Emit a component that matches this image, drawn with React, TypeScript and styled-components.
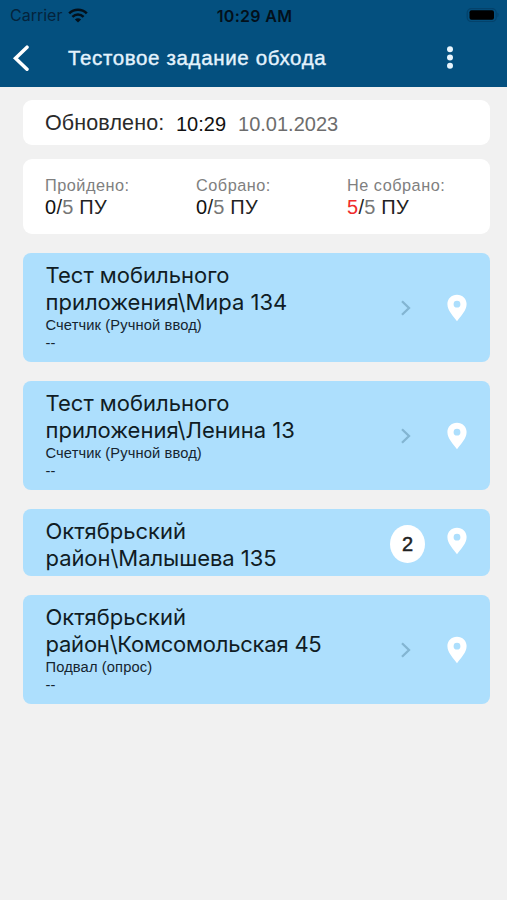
import React from "react";
import styled, { createGlobalStyle } from "styled-components";

const GlobalStyle = createGlobalStyle`
  * { box-sizing: border-box; }
  body { margin: 0; background: #f1f1f1; }
`;

const helvetica = `"Liberation Sans", Arial, sans-serif`;
const system = `Inter, "Liberation Sans", sans-serif`;

const Screen = styled.div`
  width: 507px;
  min-height: 900px;
  background: #f1f1f1;
  color: #111;
  font-family: ${helvetica};
`;

const Header = styled.header`
  height: 87px;
  background: #04507f;
`;

const StatusBar = styled.div`
  display: grid;
  grid-template-columns: 1fr auto 1fr;
  align-items: center;
  height: 30px;
  padding: 0 8px 0 10px;
  color: #03101b;
  font-family: ${system};
  font-size: 16px;
  line-height: 28px;
`;

const Carrier = styled.div`
  display: flex;
  align-items: center;
  gap: 6px;
  color: #04243c;
`;

const Clock = styled.div`
  padding-top: 1px;
  font-weight: 600;
  font-size: 16px;
  letter-spacing: 0.3px;
`;

const Battery = styled.svg`
  justify-self: end;
`;

const NavBar = styled.div`
  display: flex;
  align-items: center;
  height: 57px;
  padding: 0 49px 1px 12px;
`;

const Title = styled.h1`
  flex: 1;
  margin: 0 0 0 38px;
  font-size: 20.5px;
  font-weight: 400;
  line-height: 24px;
  letter-spacing: 0.64px;
  white-space: nowrap;
  color: #e4f3fd;
  -webkit-text-stroke: 0.4px #e4f3fd;
`;

const Content = styled.main`
  display: flex;
  flex-direction: column;
  padding: 13px 17.5px 0 22.5px;
`;

const Updated = styled.section`
  display: flex;
  align-items: center;
  height: 45px;
  padding: 2px 22.5px 0;
  border-radius: 9px;
  background: #fff;
  font-size: 20px;
  white-space: nowrap;
`;

const UpdatedLabel = styled.span`
  width: 131px;
  padding-bottom: 1px;
  font-size: 21.5px;
  letter-spacing: 0.12px;
  color: #2a2a2a;
`;

const UpdatedTime = styled.span`
  padding-top: 1px;
`;

const UpdatedDate = styled.span`
  margin-left: 12px;
  padding-top: 1px;
  color: #6d6d6d;
`;

const Stats = styled.section`
  display: grid;
  grid-template-columns: 151px 151px 1fr;
  height: 75px;
  margin-top: 14px;
  padding: 16px 0 0 22.5px;
  border-radius: 9px;
  background: #fff;
`;

const StatLabel = styled.div`
  font-size: 16.3px;
  line-height: 20px;
  letter-spacing: 0.5px;
  color: #808080;
`;

const StatValue = styled.div`
  font-size: 20px;
  line-height: 24px;
  letter-spacing: 0.25px;
  color: #222;
`;

const Count = styled.span<{ $alert?: boolean }>`
  color: ${(p) => (p.$alert ? "#f02b2b" : "#111")};
`;

const Total = styled.span`
  color: #777;
`;

const TaskList = styled.div`
  display: flex;
  flex-direction: column;
  gap: 19px;
  margin-top: 19px;
`;

const Task = styled.article<{ $compact?: boolean }>`
  display: grid;
  grid-template-columns: 1fr 36px 65px;
  height: ${(p) => (p.$compact ? 67 : 109)}px;
  padding-left: 23px;
  border-radius: 8px;
  background: #addffd;
`;

const TaskText = styled.div`
  padding-top: 9px;
`;

const TaskTitle = styled.div`
  font-family: ${system};
  font-size: 22px;
  line-height: 27px;
  white-space: pre;
  color: #101c24;
`;

const TitleLine = styled.div<{ $tracking?: number }>`
  letter-spacing: ${(p) => p.$tracking ?? 0}px;
`;

const TaskNotes = styled.div`
  padding-top: 1px;
  font-size: 14.7px;
  line-height: 17.5px;
  letter-spacing: 0.12px;
  color: #152530;
`;

const Slot = styled.div`
  display: flex;
  align-items: center;
  justify-content: center;
`;

const ActionSlot = styled(Slot)<{ $compact?: boolean }>`
  padding-right: ${(p) => (p.$compact ? 0 : 2)}px;
`;

const PinSlot = styled(Slot)<{ $compact?: boolean }>`
  padding-bottom: ${(p) => (p.$compact ? 3 : 0)}px;
`;

const Badge = styled.div`
  display: flex;
  flex: none;
  align-items: center;
  justify-content: center;
  width: 35px;
  height: 38px;
  margin: 3px 0 0 2px;
  border-radius: 50%;
  background: #fff;
  color: #222;
  font-size: 20px;
  -webkit-text-stroke: 0.5px #222;
`;

const WifiIcon = () => (
  <svg width="20" height="15" viewBox="0 0 20 15" fill="none" stroke="#03101b">
    <path d="M1.2 5.4C6.1.5 13.9.5 18.8 5.4" strokeWidth="2.6" />
    <path d="M4.4 8.8c3.2-3 8-3 11.2 0" strokeWidth="2.5" />
    <path d="M10 14.5 6.9 11.4c1.8-1.6 4.4-1.6 6.2 0z" fill="#03101b" stroke="none" />
  </svg>
);

const BatteryIcon = () => (
  <Battery width="33" height="15" viewBox="0 0 33 15">
    <rect x="1.2" y="0.7" width="29" height="12.8" rx="4" fill="none" stroke="#04426b" strokeWidth="1.2" />
    <rect x="3.5" y="2.3" width="24.5" height="9.4" rx="2" fill="#000" />
    <path d="M31.4 4.6c1.6.8 1.6 3.8 0 4.6z" fill="#04426b" />
  </Battery>
);

const BackIcon = () => (
  <svg width="18" height="27" viewBox="0 0 18 27" fill="none">
    <path d="M15 2.2 3.5 13.2 15 24.2" stroke="#fff" strokeWidth="3.5" strokeLinecap="round" strokeLinejoin="miter" />
  </svg>
);

const MoreIcon = () => (
  <svg width="16" height="24" viewBox="0 0 16 24" fill="#e8f5fd">
    <circle cx="8" cy="3.3" r="3" />
    <circle cx="8" cy="11.5" r="3" />
    <circle cx="8" cy="19.7" r="3" />
  </svg>
);

const ChevronIcon = () => (
  <svg width="12" height="18" viewBox="0 0 12 18" fill="none">
    <path d="M2 2.2 9 9 2 15.8" stroke="#83b5d2" strokeWidth="2.3" />
  </svg>
);

const PinIcon = () => (
  <svg width="20" height="28" viewBox="0 0 20 28">
    <path
      fillRule="evenodd"
      fill="#fff"
      d="M10 .7C4.5.7.4 4.8.4 10.1.4 16.7 6.2 22 10 27.3c3.8-5.3 9.6-10.6 9.6-17.2C19.6 4.8 15.5.7 10 .7Zm0 6.1a3.4 3.4 0 1 1 0 6.8 3.4 3.4 0 0 1 0-6.8Z"
    />
  </svg>
);

type Stat = { label: string; count: number; total: number; alert?: boolean };

const stats: Stat[] = [
  { label: "Пройдено:", count: 0, total: 5 },
  { label: "Собрано:", count: 0, total: 5 },
  { label: "Не собрано:", count: 5, total: 5, alert: true },
];

type TaskItem = {
  district: string;
  address: string;
  tracking?: number;
  note?: string;
  badge?: number;
};

const tasks: TaskItem[] = [
  { district: "Тест мобильного", address: "приложения\\Мира 134", note: "Счетчик (Ручной ввод)" },
  { district: "Тест мобильного", address: "приложения\\Ленина 13", note: "Счетчик (Ручной ввод)" },
  { district: "Октябрьский", address: "район\\Малышева 135", tracking: -0.06, badge: 2 },
  { district: "Октябрьский", address: "район\\Комсомольская 45", tracking: -0.22, note: "Подвал (опрос)" },
];

export default function App() {
  return (
    <Screen>
      <GlobalStyle />
      <Header>
        <StatusBar>
          <Carrier>
            Carrier <WifiIcon />
          </Carrier>
          <Clock>10:29 AM</Clock>
          <BatteryIcon />
        </StatusBar>
        <NavBar>
          <BackIcon />
          <Title>Тестовое задание обхода</Title>
          <MoreIcon />
        </NavBar>
      </Header>
      <Content>
        <Updated>
          <UpdatedLabel>Обновлено:</UpdatedLabel>
          <UpdatedTime>10:29</UpdatedTime>
          <UpdatedDate>10.01.2023</UpdatedDate>
        </Updated>
        <Stats>
          {stats.map((s) => (
            <div key={s.label}>
              <StatLabel>{s.label}</StatLabel>
              <StatValue>
                <Count $alert={s.alert}>{s.count}</Count>/<Total>{s.total}</Total> ПУ
              </StatValue>
            </div>
          ))}
        </Stats>
        <TaskList>
          {tasks.map((t) => {
            const compact = t.badge !== undefined;
            return (
              <Task key={t.address} $compact={compact}>
                <TaskText>
                  <TaskTitle>
                    <TitleLine>{t.district}</TitleLine>
                    <TitleLine $tracking={t.tracking}>{t.address}</TitleLine>
                  </TaskTitle>
                  {t.note && (
                    <TaskNotes>
                      <div>{t.note}</div>
                      <div>--</div>
                    </TaskNotes>
                  )}
                </TaskText>
                <ActionSlot $compact={compact}>
                  {compact ? <Badge>{t.badge}</Badge> : <ChevronIcon />}
                </ActionSlot>
                <PinSlot $compact={compact}>
                  <PinIcon />
                </PinSlot>
              </Task>
            );
          })}
        </TaskList>
      </Content>
    </Screen>
  );
}
